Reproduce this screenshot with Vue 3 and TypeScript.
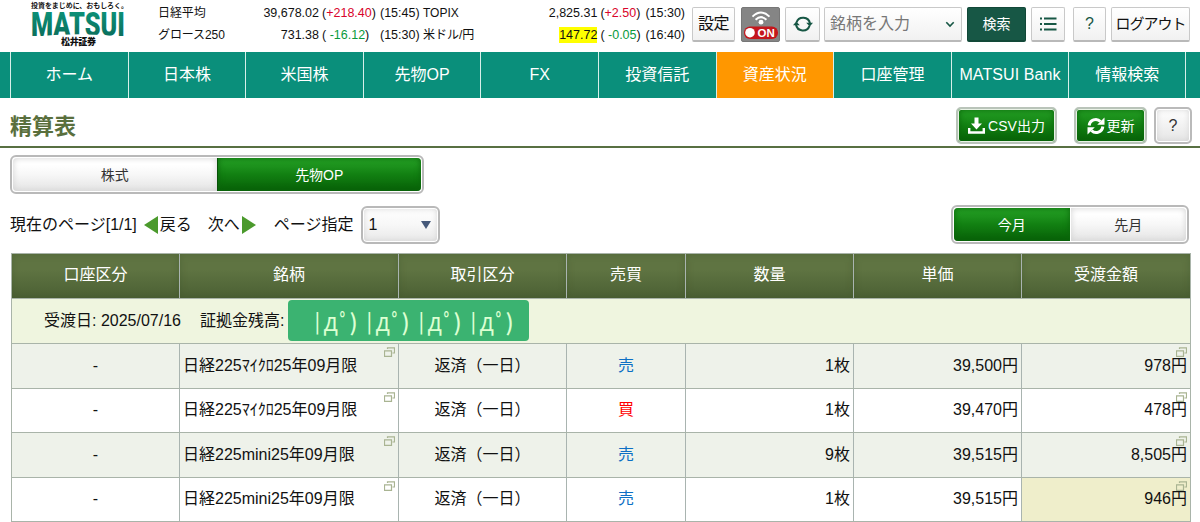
<script setup lang="ts">
interface Quote {
  name: string
  value: string
  pre: string
  diff: string
  up: boolean
  time: string
  flash?: boolean
}
interface Row {
  name: string
  sell: boolean
  qty: string
  price: string
  amount: string
}

const quoteGroups: Quote[][] = [
  [
    { name: '日経平均', value: '39,678.02', pre: '(', diff: '+218.40', up: true, time: '(15:45)' },
    { name: 'グロース250', value: '731.38', pre: '( ', diff: '-16.12', up: false, time: '(15:30)' },
  ],
  [
    { name: 'TOPIX', value: '2,825.31', pre: '(', diff: '+2.50', up: true, time: '(15:30)' },
    { name: '米ドル/円', value: '147.72', pre: '( ', diff: '-0.05', up: false, time: '(16:40)', flash: true },
  ],
]

const menu: string[] = [
  'ホーム', '日本株', '米国株', '先物OP', 'FX', '投資信託', '資産状況', '口座管理', 'MATSUI Bank', '情報検索',
]
const activeMenu = '資産状況'

const columns: string[] = ['口座区分', '銘柄', '取引区分', '売買', '数量', '単価', '受渡金額']

const rows: Row[] = [
  { name: '日経225ﾏｲｸﾛ25年09月限', sell: true, qty: '1枚', price: '39,500円', amount: '978円' },
  { name: '日経225ﾏｲｸﾛ25年09月限', sell: false, qty: '1枚', price: '39,470円', amount: '478円' },
  { name: '日経225mini25年09月限', sell: true, qty: '9枚', price: '39,515円', amount: '8,505円' },
  { name: '日経225mini25年09月限', sell: true, qty: '1枚', price: '39,515円', amount: '946円' },
]
</script>

<template>
  <div class="page">
    <header class="top">
      <svg class="logo" width="106" height="50" viewBox="0 0 106 50">
        <defs>
          <linearGradient id="logoFill" x1="0" y1="0" x2="0" y2="1">
            <stop offset="0" stop-color="#0c9a7f" />
            <stop offset="1" stop-color="#0b6454" />
          </linearGradient>
        </defs>
        <text class="tagline" x="5" y="7.6" textLength="97">投資をまじめに、おもしろく。</text>
        <text class="brand" x="5" y="36" textLength="94" lengthAdjust="spacingAndGlyphs" fill="url(#logoFill)">MATSUI</text>
        <path d="M4 37 Q52 31.5 100 37Z" fill="#fff" />
        <text class="company" x="35" y="45" textLength="35">松井証券</text>
      </svg>

      <div class="quotes">
        <div v-for="(group, g) in quoteGroups" :key="g" :class="['group', 'g' + g]">
          <div v-for="q in group" :key="q.name" class="quote">
            <span class="qname">{{ q.name }}</span>
            <span class="qvalue"><span :class="{ flash: q.flash }">{{ q.value }}</span></span>
            <span class="qdiff">{{ q.pre }}<span :class="q.up ? 'up' : 'down'">{{ q.diff }}</span>)</span>
            <span class="qtime">{{ q.time }}</span>
          </div>
        </div>
      </div>

      <div class="tools">
        <button class="tool setting">設定</button>
        <button class="tool wifi">
          <svg width="38" height="34" viewBox="0 0 38 34">
            <g fill="none" stroke="#fff" stroke-width="2">
              <path d="M10.5 8.6Q19 0.4 27.500 8.600" />
              <path d="M13.600 11.700Q19 6.600 24.400 11.700" />
            </g>
            <circle cx="19" cy="14.200" r="2.400" fill="#fff" />
            <rect x="2" y="18.500" width="34" height="12.500" rx="6" fill="#c4161c" />
            <circle cx="8" cy="24.700" r="4.800" fill="#fff" />
            <text x="15.500" y="29" class="on">ON</text>
          </svg>
        </button>
        <button class="tool reload">
          <svg width="20" height="18" viewBox="0 0 20 18">
            <g fill="none" stroke="#175745" stroke-width="2">
              <path d="M3.500 7.500A7 7 0 0 1 17 8.500" />
              <path d="M16.500 10.800A7 7 0 0 1 3 9.500" />
            </g>
            <path d="M13.200 7.800H20L16.800 11.500ZM0 10.300H6.800L3.200 6.600Z" fill="#175745" />
          </svg>
        </button>
        <div class="tool search">
          <span>銘柄を入力</span>
          <svg width="10" height="7" viewBox="0 0 10 7"><path d="M1.300 1.200L5 5L8.700 1.200" fill="none" stroke="#175745" stroke-width="1.600" /></svg>
        </div>
        <button class="tool go">検索</button>
        <button class="tool list">
          <svg width="18" height="14" viewBox="0 0 18 14">
            <path d="M1 1.500H3M1 7H3M1 12.500H3M5 1.500H17.500M5 7H17.500M5 12.500H17.500" stroke="#175745" stroke-width="2" />
          </svg>
        </button>
        <button class="tool help">?</button>
        <button class="tool logout">ログアウト</button>
      </div>
    </header>

    <nav class="menu">
      <a v-for="m in menu" :key="m" :class="{ active: m === activeMenu, bank: m === 'MATSUI Bank' }">{{ m }}</a>
    </nav>

    <div class="heading">
      <h1>精算表</h1>
      <button class="action csv">
        <svg width="17" height="17" viewBox="0 0 17 17">
          <path d="M6.500 0.500H10.500V6.500H14L8.500 12.500L3 6.500H6.500Z" fill="#fff" />
          <path d="M1.200 11V15.500H15.800V11" fill="none" stroke="#fff" stroke-width="2.400" />
        </svg>
        <span>CSV出力</span>
      </button>
      <button class="action update">
        <svg width="18" height="18" viewBox="0 0 18 18">
          <g fill="none" stroke="#fff" stroke-width="3">
            <path d="M2.200 8.500A6.600 6.600 0 0 1 13.500 4.500" />
            <path d="M15.800 9.500A6.600 6.600 0 0 1 4.500 13.500" />
          </g>
          <path d="M17.500 0.500V7.800H10.200ZM0.500 17.500V10.200H7.800Z" fill="#fff" />
        </svg>
        <span>更新</span>
      </button>
      <button class="action plain">?</button>
    </div>

    <div class="switch tabs">
      <span>株式</span>
      <span class="on-side">先物OP</span>
    </div>

    <div class="paging">
      <span>現在のページ[1/1]</span>
      <svg class="prev" width="14" height="18" viewBox="0 0 14 18"><path d="M14 0V18L0 9Z" fill="#4b9a2c" /></svg>
      <span>戻る</span>
      <span class="next">次へ</span>
      <svg width="14" height="18" viewBox="0 0 14 18"><path d="M0 0V18L14 9Z" fill="#4b9a2c" /></svg>
      <span class="jump">ページ指定</span>
      <div class="select">
        <span>1</span>
        <svg width="10" height="8" viewBox="0 0 10 8"><path d="M0 0H10L5 8Z" fill="#46597a" /></svg>
      </div>
      <div class="switch months">
        <span class="on-side">今月</span>
        <span>先月</span>
      </div>
    </div>

    <div class="table">
      <div class="tr th">
        <div v-for="c in columns" :key="c">{{ c }}</div>
      </div>
      <div class="summary">
        <span class="date">受渡日: 2025/07/16</span>
        <span class="margin">証拠金残高:</span>
        <span class="mask">
          <span v-for="n in 4" :key="n" class="face"><i class="bar">|</i><i class="de">д</i><i class="ring">ﾟ</i><i class="paren">)</i></span>
        </span>
      </div>
      <div v-for="(r, i) in rows" :key="i" class="tr td">
        <div>-</div>
        <div class="name">
          {{ r.name }}
          <svg class="popup" width="11" height="10" viewBox="0 0 11 10"><path d="M3.500 2V0.800H10.500V6H8.500M0.500 4H7.500V9.300H0.500ZM0 3.800H8M3 0.800H11" fill="none" stroke="#a9b492" stroke-width="1.200" /></svg>
        </div>
        <div class="kind">返済（一日）</div>
        <div :class="r.sell ? 'sell' : 'buy'">{{ r.sell ? '売' : '買' }}</div>
        <div class="num">{{ r.qty }}</div>
        <div class="num">{{ r.price }}</div>
        <div :class="['num', { picked: i === rows.length - 1 }]">
          {{ r.amount }}
          <svg class="popup" width="11" height="10" viewBox="0 0 11 10"><path d="M3.500 2V0.800H10.500V6H8.500M0.500 4H7.500V9.300H0.500ZM0 3.800H8M3 0.800H11" fill="none" stroke="#a9b492" stroke-width="1.200" /></svg>
        </div>
      </div>
    </div>
  </div>
</template>

<style>
body {
  background: #fff;
  overflow: hidden;
}
</style>

<style scoped>
.page {
  width: 1200px;
  height: 522px;
  overflow: hidden;
  font: 16px/20px "Liberation Sans", "Noto Sans CJK JP", sans-serif;
  color: #111;
  display: flex;
  flex-direction: column;
}
.page * {
  box-sizing: border-box;
  white-space: nowrap;
}
button {
  font: inherit;
  color: inherit;
  padding: 0;
  margin: 0;
}
svg {
  display: block;
  flex: none;
}

/* top bar */
.top {
  height: 52px;
  flex: none;
  display: flex;
}
.logo {
  margin-left: 26px;
}
.tagline {
  font: bold 7px "Noto Sans CJK JP", sans-serif;
  fill: #111;
}
.brand {
  font: 900 33px Roboto, sans-serif;
}
.company {
  font: 900 9px "Noto Sans CJK JP", sans-serif;
  fill: #111;
}
.quotes {
  display: flex;
  margin-left: 26px;
  padding-top: 2px;
  width: 534px;
  font-size: 12.500px;
}
.group {
  flex: none;
}
.g0 {
  width: 265px;
}
.g1 {
  width: 262px;
}
.quote {
  height: 22px;
  line-height: 22px;
  display: flex;
}
.qname {
  width: 90px;
  flex: none;
  font-size: 12px;
}
.qvalue {
  width: 71px;
  text-align: right;
}
.g0 .qname {
  letter-spacing: -0.1px;
}
.g1 .qvalue {
  width: 85px;
}
.g0 .qdiff {
  width: 58px;
}
.g1 .qdiff {
  width: 45px;
}
.qdiff {
  white-space: pre;
  text-align: left;
  margin-left: 3px;
  flex: none;
}
.qdiff > span {
  white-space: pre;
}
.qtime {
  flex: none;
}
.up {
  color: #d9042b;
}
.down {
  color: #0a9a3c;
}
.flash {
  background: #ff0;
  padding: 1px 0;
}
.tools {
  display: flex;
  padding-top: 7px;
}
.tool {
  height: 35px;
  flex: none;
  border: 1px solid #c9c9c9;
  border-bottom: 2px solid #b9b9b9;
  border-radius: 2px;
  background: linear-gradient(#fff, #f1f1f1);
  display: flex;
  align-items: center;
  justify-content: center;
}
.setting {
  width: 43px;
  letter-spacing: -0.500px;
}
.wifi {
  width: 39px;
  margin-left: 6px;
  background: #858585;
  border: 1px solid #777;
}
.on {
  font: bold 11.500px "Liberation Sans", sans-serif;
  fill: #fff;
}
.reload {
  width: 35px;
  margin-left: 5px;
}
.search {
  width: 138px;
  margin-left: 4px;
  padding: 0 6px 0 5px;
  justify-content: space-between;
  color: #777;
}
.tool.go {
  width: 59px;
  margin-left: 5px;
  background: #175745;
  border-color: #124838;
  color: #fff;
  font-size: 14px;
}
.list {
  width: 34px;
  margin-left: 5px;
}
.help {
  width: 33px;
  margin-left: 8px;
  color: #175745;
}
.logout {
  width: 79px;
  margin-left: 5px;
  font-size: 15px;
  letter-spacing: -1px;
}

/* main menu */
.menu {
  height: 46px;
  flex: none;
  padding-left: 10px;
  background: #0a8f7b;
  display: flex;
}
.menu a {
  width: 117.600px;
  flex: none;
  border-left: 1px solid #d7efe9;
  color: #fff;
  text-align: center;
  line-height: 45px;
}
.menu a:last-child {
  width: 118px;
  border-right: 1px solid #d7efe9;
}
.menu .active {
  background: #ff9700;
}
.menu .bank {
  letter-spacing: 0.100px;
}

/* heading */
.heading {
  height: 50px;
  flex: none;
  border-bottom: 2px solid #587042;
  padding: 9px 8px 0 10px;
  display: flex;
}
h1 {
  margin: 0;
  flex: 1;
  font-size: 22px;
  line-height: 40px;
  color: #596f3d;
}
.action {
  height: 37px;
  flex: none;
  border: 2px solid #b9c4b9;
  border-radius: 5px;
  box-shadow: inset 0 0 0 1px #e9f2e6, inset 0 0 6px 1px #0a650a;
  background: linear-gradient(#27a327, #128012 50%, #076007);
  color: #fff;
  font-size: 14px;
  display: flex;
  align-items: center;
  justify-content: center;
}
.csv {
  width: 101px;
  gap: 3px;
}
.update {
  width: 73px;
  margin-left: 17px;
  gap: 2px;
}
.plain {
  width: 38px;
  margin-left: 7px;
  border-color: #bababa;
  background: linear-gradient(#fff, #e5e5e5);
  box-shadow: inset 0 0 0 1px #fff, inset 0 0 6px #ccc;
  color: #333;
  font-size: 16px;
}

/* segmented switches */
.switch {
  flex: none;
  height: 39px;
  border: 2px solid #b9b9b9;
  border-radius: 6px;
  display: flex;
  padding: 1px;
  font-size: 14px;
  color: #333;
}
.switch span {
  flex: 1;
  display: flex;
  align-items: center;
  justify-content: center;
  background: linear-gradient(#fff 20%, #f7f7f7 50%, #e4e4e4);
  box-shadow: inset 0 0 6px #d2d2d2;
}
.switch span:first-child {
  border-radius: 4px 0 0 4px;
}
.switch span:last-child {
  border-radius: 0 4px 4px 0;
}
.switch .on-side {
  background: linear-gradient(#27a327, #128012 50%, #076007);
  box-shadow: inset 0 0 6px #0a650a;
  color: #fff;
}
.tabs {
  width: 414px;
  margin: 7px 0 0 10px;
}
.tabs .on-side {
  border-left: 1px solid #075207;
}
.months {
  width: 238px;
  margin: 0 11px 0 auto;
}
.months span + span {
  border-left: 1px solid #fff;
}

/* paging */
.paging {
  height: 39px;
  flex: none;
  margin: 11px 0 9px 10px;
  display: flex;
  align-items: center;
}
.prev {
  margin: 0 2px 0 7px;
}
.next {
  margin: 0 2px 0 16px;
}
.jump {
  margin: 0 7px 0 18px;
}
.select {
  width: 79px;
  height: 38px;
  border: 2px solid #b9b9b9;
  border-radius: 6px;
  background: linear-gradient(#fff, #f7f7f7 50%, #e8e8e8);
  box-shadow: inset 0 0 0 1px #fff, inset 0 0 6px #ccc;
  padding: 0 7px 0 6px;
  display: flex;
  align-items: center;
  justify-content: space-between;
}

/* settlement table */
.table {
  width: 1180px;
  flex: none;
  margin-left: 11px;
  border: 1px solid #a9b4a9;
  border-bottom: 0;
}
.tr {
  display: grid;
  grid-template-columns: 168px 219px 168px 119px 168px 168px 168px;
  border-bottom: 1px solid #a9b4a9;
}
.tr > div {
  display: flex;
  align-items: center;
  justify-content: center;
  border-right: 1px solid #a9b4b0;
}
.tr > div:last-child {
  border-right: 0;
}
.th {
  height: 45px;
  color: #fff;
}
.th > div {
  background: linear-gradient(#5f7442 35%, #4b6034);
  box-shadow: inset 0 0 7px rgba(58, 76, 38, 0.350);
  padding-bottom: 2px;
}
.summary {
  height: 45px;
  background: #eff5df;
  border-bottom: 1px solid #a9b4a9;
  display: flex;
  align-items: center;
  padding-left: 32px;
}
.margin {
  margin-left: 19px;
}
.mask {
  width: 241px;
  height: 41px;
  margin: -1px 0 0 4px;
  padding-left: 26px;
  border-radius: 4px;
  background: #3bb371;
  color: #dcffd2;
  display: flex;
  align-items: center;
}
.face {
  width: 52px;
  flex: none;
  display: flex;
  align-items: center;
  font: 500 23px/30px "Noto Sans CJK JP", sans-serif;
}
.face i {
  font-style: normal;
  flex: none;
}
.bar {
  width: 9px;
  font-size: 20px;
}
.de {
  width: 16px;
  font-family: "Open Sans", "DejaVu Sans", sans-serif;
  font-size: 25px;
}
.ring {
  width: 10px;
}
.paren {
  width: 12px;
}
.td {
  height: 44.500px;
}
.td:nth-child(odd) {
  background: #eef2ea;
}
.td .name {
  position: relative;
  justify-content: flex-start;
  padding-left: 3px;
}
.td .num {
  position: relative;
  justify-content: flex-end;
  padding-right: 3px;
}
.popup {
  position: absolute;
  top: 3px;
  right: 3px;
}
.sell {
  color: #0d6fc4;
}
.buy {
  color: #f00;
}
.picked {
  background: #efeecb;
}
</style>
